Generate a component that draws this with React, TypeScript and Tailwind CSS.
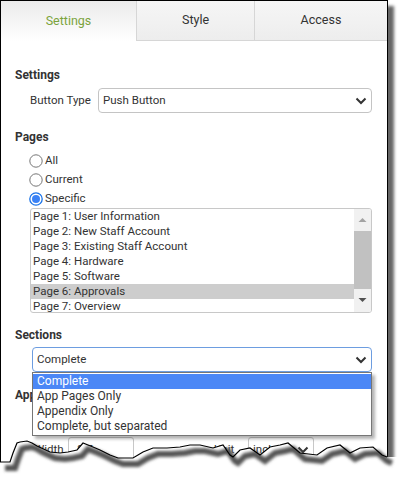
import React from "react";

const tornEdge: [number, number][] = [
  [0, 462], [10, 462], [13, 453], [17, 443], [20, 442], [27, 441], [32, 443],
  [37, 446], [50, 452], [60, 453], [68, 452], [77, 450], [83, 443], [88, 445],
  [93, 447], [100, 450], [110, 455], [118, 458], [133, 458], [143, 452],
  [153, 448], [167, 448], [180, 447], [190, 445], [200, 445], [213, 448],
  [223, 445], [230, 455], [233, 457], [240, 450], [250, 448], [260, 455],
  [270, 447], [280, 445], [288, 443], [300, 453], [317, 455], [327, 448],
  [340, 445], [350, 453], [360, 448], [373, 447], [382, 455], [387, 457],
];

const pages = [
  "Page 1: User Information",
  "Page 2: New Staff Account",
  "Page 3: Existing Staff Account",
  "Page 4: Hardware",
  "Page 5: Software",
  "Page 6: Approvals",
  "Page 7: Overview",
];

const sectionOptions = ["Complete", "App Pages Only", "Appendix Only", "Complete, but separated"];

function Chevron() {
  return (
    <svg width="12" height="8" viewBox="0 0 12 8" className="shrink-0">
      <path d="M1.5 1.5 L6 6 L10.5 1.5" fill="none" stroke="#333" strokeWidth="2" />
    </svg>
  );
}

function Radio({ checked }: { checked?: boolean }) {
  return (
    <svg width="14" height="14" viewBox="0 0 14 14" className="shrink-0">
      {checked ? (
        <>
          <circle cx="7" cy="7" r="6.2" fill="white" stroke="#1a73e8" strokeWidth="1.3" />
          <circle cx="7" cy="7" r="4" fill="#3b82f6" />
        </>
      ) : (
        <circle cx="7" cy="7" r="6.2" fill="white" stroke="#767676" strokeWidth="1" />
      )}
    </svg>
  );
}

function TornEdge() {
  const line = tornEdge.map(([x, y]) => `${x},${y}`).join(" ");
  const shadow = tornEdge.map(([x, y]) => `${x + 5},${y + 6}`).join(" ");
  const cover = `${line} 402,457 402,485 0,485`;
  return (
    <svg
      className="absolute left-0 top-[430px]"
      width="402"
      height="55"
      viewBox="0 430 402 55"
    >
      <defs>
        <filter id="blur" x="-10%" y="-50%" width="120%" height="200%">
          <feGaussianBlur stdDeviation="1.6" />
        </filter>
      </defs>
      <polygon points={cover} fill="white" />
      <polyline points={shadow} fill="none" stroke="#555" strokeWidth="6" filter="url(#blur)" />
      <polyline points={line} fill="none" stroke="#000" strokeWidth="1.2" />
    </svg>
  );
}

export default function App() {
  return (
    <div className="relative h-[485px] w-[402px] overflow-hidden bg-white font-['Roboto',sans-serif] text-[11.5px] text-[#333]">
      <div className="h-[520px] w-[388px] border-l border-r border-t border-black bg-white shadow-[6px_6px_3px_rgba(0,0,0,0.6)]">
        {/* tabs */}
        <div className="flex h-[40px] text-[12.5px]">
          <div className="flex w-[135px] items-center justify-center bg-gradient-to-b from-[#ebebeb] to-white text-[#7ba33c]">
            Settings
          </div>
          <div className="flex w-[118px] items-center justify-center border-b border-l border-[#d6d6d6] bg-gradient-to-b from-[#f6f6f6] to-[#ededed]">
            Style
          </div>
          <div className="flex flex-1 items-center justify-center border-b border-l border-[#d6d6d6] bg-gradient-to-b from-[#f6f6f6] to-[#ededed]">
            Access
          </div>
        </div>

        <div className="pl-[14px] pr-[15px] pt-[26px]">
          <div className="h-[16px] text-[12px] font-bold leading-[16px]">Settings</div>
          <div className="mt-[5px] flex items-center pl-[15px]">
            <span className="w-[68px] shrink-0">Button Type</span>
            <div className="flex h-[25px] flex-1 items-center justify-between rounded-[4px] border border-[#c4c4c4] pl-[4px] pr-[4px]">
              <span>Push Button</span>
              <Chevron />
            </div>
          </div>

          <div className="mt-[16px] h-[16px] text-[12px] font-bold leading-[16px]">Pages</div>
          <div className="mt-[6px] pl-[14px]">
            {["All", "Current", "Specific"].map((label) => (
              <div key={label} className="flex h-[19px] items-center gap-[2px]">
                <Radio checked={label === "Specific"} />
                <span>{label}</span>
              </div>
            ))}
          </div>

          <div className="ml-[15px] flex h-[105px] overflow-hidden rounded-[3px] border border-[#c8c8c8]">
            <div className="flex-1">
              {pages.map((p) => (
                <div
                  key={p}
                  className={`h-[15px] pl-[2px] leading-[15px] ${p.startsWith("Page 6") ? "bg-[#cdcdcd]" : ""}`}
                >
                  {p}
                </div>
              ))}
            </div>
            <div className="flex w-[17px] flex-col items-center bg-[#f1f1f1]">
              <svg width="17" height="22" viewBox="0 0 17 22" className="shrink-0">
                <path d="M4.5 13 L8.5 9 L12.5 13 Z" fill="#a3a3a3" />
              </svg>
              <div className="h-[58px] w-[17px] bg-[#c1c1c1]" />
              <svg width="17" height="22" viewBox="0 0 17 22" className="shrink-0">
                <path d="M4.5 9 L8.5 13 L12.5 9 Z" fill="#505050" />
              </svg>
            </div>
          </div>

          <div className="mt-[14px] h-[16px] text-[12px] font-bold leading-[16px]">Sections</div>
          <div className="relative ml-[17px] mt-[4px]">
            <div className="flex h-[25px] items-center justify-between rounded-[4px] border border-[#6d9de0] pl-[4px] pr-[4px]">
              <span>Complete</span>
              <Chevron />
            </div>
            <div className="absolute left-0 right-0 top-full z-10 border border-[#767676] bg-white py-[1px] text-[12px] shadow-[3px_3px_3px_rgba(0,0,0,0.3)]">
              {sectionOptions.map((o, i) => (
                <div
                  key={o}
                  className={`h-[15px] pl-[4px] leading-[15px] ${i === 0 ? "bg-[#4b87f6] text-white" : ""}`}
                >
                  {o}
                </div>
              ))}
            </div>
          </div>

          <div className="mt-[15px] h-[16px] text-[12px] font-bold leading-[16px]">Appearance</div>
          <div className="mt-[34px] flex items-center pl-[19px]">
            <span className="w-[34px] shrink-0">Width</span>
            <div className="flex h-[25px] w-[66px] items-center rounded-[3px] border border-[#c8c8c8] pl-[8px]">
              8.5
            </div>
            <span className="ml-[80px] w-[34px] shrink-0">Unit</span>
            <div className="flex h-[25px] w-[66px] items-center justify-between rounded-[3px] border border-[#c8c8c8] pl-[4px] pr-[4px]">
              <span>inch</span>
              <Chevron />
            </div>
          </div>
        </div>
      </div>
      <TornEdge />
    </div>
  );
}
